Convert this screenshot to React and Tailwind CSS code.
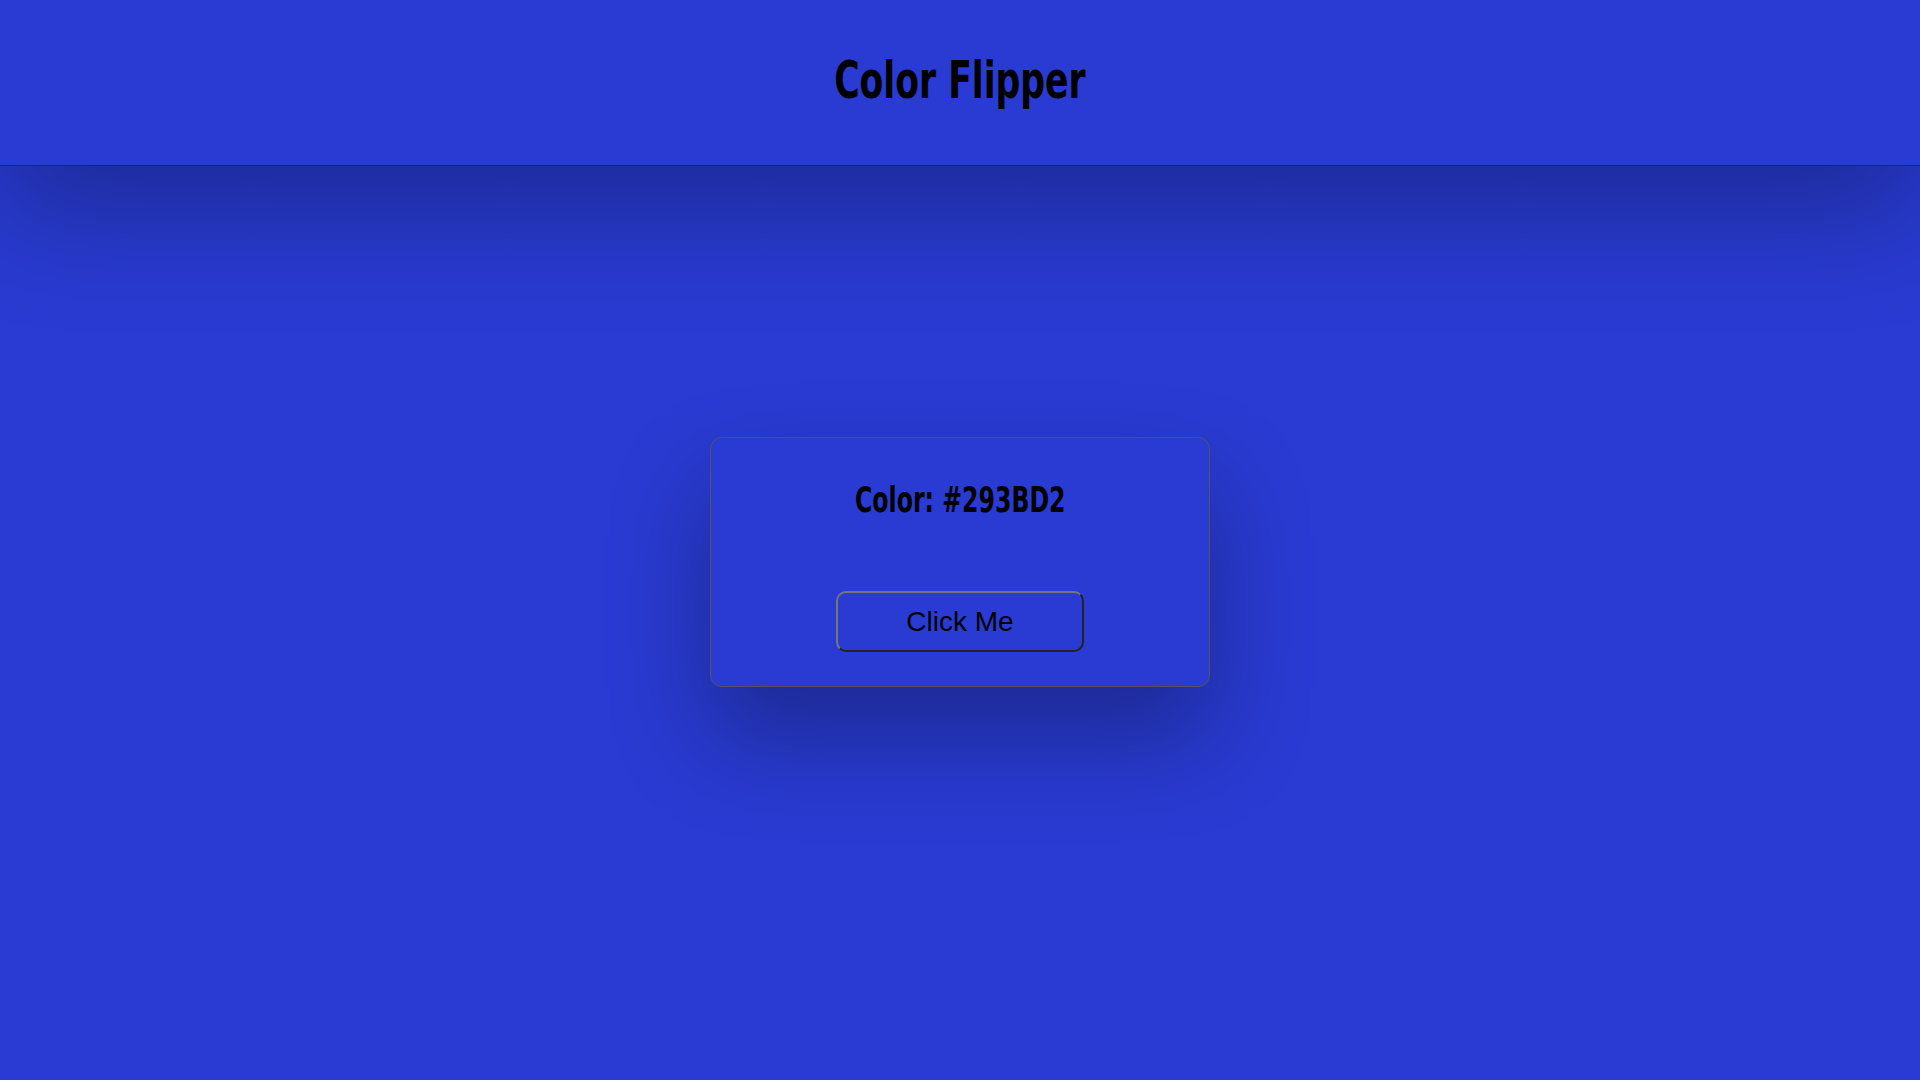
import React, { useState } from 'react';

const colors = ['#293BD2', '#D2293B', '#29D27A', '#F2B705', '#8E44AD', '#1ABC9C'];

function App() {
  const [color, setColor] = useState('#293BD2');

  // pick a random colour from the list
  const flip = () => {
    const next = colors[Math.floor(Math.random() * colors.length)];
    setColor(next);
  };

  return (
    <div className="min-h-screen w-full" style={{ backgroundColor: color }}>
      <header className="relative z-10 flex h-[166px] justify-center border-b border-[#2a2a2a] pt-[54px] shadow-[0_40px_120px_rgba(0,0,0,0.3)]" style={{ backgroundColor: color }}>
        <h1 className="inline-block origin-center scale-x-[0.74] font-['DejaVu_Sans_Condensed',sans-serif] text-[52px] font-bold leading-none text-black">
          Color Flipper
        </h1>
      </header>

      <main className="flex justify-center pt-[271px]">
        <div className="flex h-[250px] w-[500px] flex-col items-center rounded-xl border border-[#555] pt-[44px] shadow-[0_50px_100px_rgba(0,0,0,0.3)]">
          <h2 className="inline-block origin-center scale-x-[0.73] font-['DejaVu_Sans_Condensed',sans-serif] text-[36px] font-bold leading-none text-black">
            Color: {color}
          </h2>
          <button
            onClick={flip}
            className="mt-[73px] h-[61px] w-[248px] rounded-[10px] border-2 border-t-[#767676] border-l-[#767676] border-r-[#222] border-b-[#222] bg-transparent font-['Liberation_Sans',Arial,sans-serif] text-[28px] text-black"
          >
            Click Me
          </button>
        </div>
      </main>
    </div>
  );
}

export default App;
